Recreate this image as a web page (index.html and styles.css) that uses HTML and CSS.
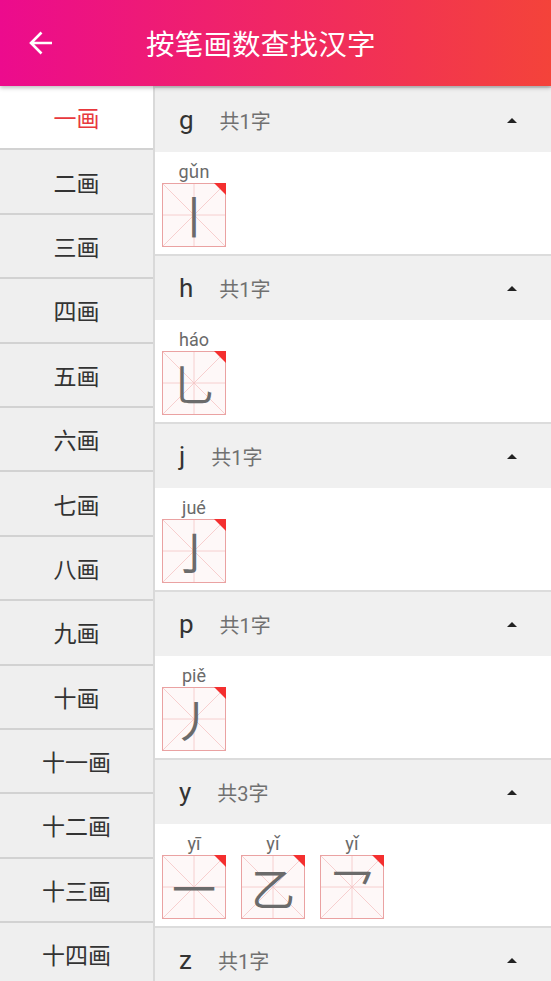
FILE: index.html
```html
<!DOCTYPE html>
<html lang="zh-CN">
<head>
  <meta charset="UTF-8">
  <meta name="viewport" content="width=device-width, initial-scale=1.0">
  <title>按笔画数查找汉字</title>
  <link rel="stylesheet" href="styles.css">
</head>
<body>
  <header class="topbar">
    <span class="back">
      <svg width="24" height="24" viewBox="0 0 24 24"><path d="M23 12H2 M12.5 1.5 L2 12 L12.5 22.5" fill="none" stroke="#fff" stroke-width="2.6"/></svg>
    </span>
    <h1 class="title">按笔画数查找汉字</h1>
  </header>

  <div class="main">
    <ul class="sidebar">
      <li class="active">一画</li>
      <li>二画</li>
      <li>三画</li>
      <li>四画</li>
      <li>五画</li>
      <li>六画</li>
      <li>七画</li>
      <li>八画</li>
      <li>九画</li>
      <li>十画</li>
      <li>十一画</li>
      <li>十二画</li>
      <li>十三画</li>
      <li>十四画</li>
    </ul>

    <div class="list">
      <section class="group">
        <div class="group-head"><span class="letter">g</span><span class="count">共1字</span><span class="caret"></span></div>
        <div class="chars">
          <div class="char"><span class="py">gǔn</span><div class="cell"><svg class="grid" viewBox="0 0 64 64"><use href="#grid"/></svg><span class="hz">丨</span></div></div>
        </div>
      </section>
      <section class="group">
        <div class="group-head"><span class="letter">h</span><span class="count">共1字</span><span class="caret"></span></div>
        <div class="chars">
          <div class="char"><span class="py">háo</span><div class="cell"><svg class="grid" viewBox="0 0 64 64"><use href="#grid"/></svg><span class="hz">乚</span></div></div>
        </div>
      </section>
      <section class="group">
        <div class="group-head"><span class="letter">j</span><span class="count">共1字</span><span class="caret"></span></div>
        <div class="chars">
          <div class="char"><span class="py">jué</span><div class="cell"><svg class="grid" viewBox="0 0 64 64"><use href="#grid"/></svg><span class="hz">亅</span></div></div>
        </div>
      </section>
      <section class="group">
        <div class="group-head"><span class="letter">p</span><span class="count">共1字</span><span class="caret"></span></div>
        <div class="chars">
          <div class="char"><span class="py">piě</span><div class="cell"><svg class="grid" viewBox="0 0 64 64"><use href="#grid"/></svg><span class="hz">丿</span></div></div>
        </div>
      </section>
      <section class="group">
        <div class="group-head"><span class="letter">y</span><span class="count">共3字</span><span class="caret"></span></div>
        <div class="chars">
          <div class="char"><span class="py">yī</span><div class="cell"><svg class="grid" viewBox="0 0 64 64"><use href="#grid"/></svg><span class="hz">一</span></div></div>
          <div class="char"><span class="py">yǐ</span><div class="cell"><svg class="grid" viewBox="0 0 64 64"><use href="#grid"/></svg><span class="hz">乙</span></div></div>
          <div class="char"><span class="py">yǐ</span><div class="cell"><svg class="grid" viewBox="0 0 64 64"><use href="#grid"/></svg><span class="hz">乛</span></div></div>
        </div>
      </section>
      <section class="group">
        <div class="group-head"><span class="letter">z</span><span class="count">共1字</span><span class="caret"></span></div>
      </section>
    </div>
  </div>

  <!-- shared 米字格 grid -->
  <svg width="0" height="0" class="defs">
    <defs>
      <g id="grid">
        <rect x="0" y="0" width="64" height="64" fill="#fef8f8"/>
        <path d="M0 0L64 64 M64 0L0 64 M32 0V64 M0 32H64" stroke="#f5c4c4" stroke-width="0.8"/>
        <rect x="0.5" y="0.5" width="63" height="63" fill="none" stroke="#eaa2a2" stroke-width="1"/>
        <path d="M52 0H64V12Z" fill="#f42f2f"/>
      </g>
    </defs>
  </svg>
</body>
</html>
```

FILE: styles.css
```css
body {
  margin: 0;
  font-family: Roboto, "Noto Sans CJK SC", sans-serif;
  background: #fff;
  overflow: hidden;
}

.topbar {
  position: relative;
  z-index: 2;
  height: 86px;
  display: flex;
  align-items: center;
  padding-left: 29px;
  background: linear-gradient(to right, #ec0b8d, #f4433a);
  box-shadow: 0 2px 4px rgba(0, 0, 0, 0.25);
}

.back {
  display: flex;
  width: 24px;
  height: 24px;
}

.title {
  margin: 0 0 2px 93px;
  font-size: 28.5px;
  font-weight: normal;
  color: #fff;
  letter-spacing: 0.2px;
}

.main {
  display: flex;
  height: calc(100vh - 86px);
}

.sidebar {
  list-style: none;
  margin: 0;
  padding: 0;
  width: 153px;
  flex: none;
  background: #efefef;
  border-right: 2px solid #d9d9d9;
}

.sidebar li {
  height: 62.4px;
  display: flex;
  align-items: center;
  justify-content: center;
  border-bottom: 2px solid #d2d2d2;
  font-size: 23px;
  color: #333;
}

.sidebar li.active {
  background: #fff;
  color: #e8383d;
}

.list {
  flex: 1;
}

.group {
  border-top: 2px solid #dcdcdc;
}

.group-head {
  height: 64px;
  display: flex;
  align-items: center;
  padding: 0 34px 0 24px;
  background: #f0f0f0;
}

.letter {
  font-size: 26px;
  color: #333;
  margin-right: 26px;
}

.count {
  font-size: 20px;
  color: #707070;
}

.caret {
  margin-left: auto;
  width: 0;
  height: 0;
  border-left: 5px solid transparent;
  border-right: 5px solid transparent;
  border-bottom: 5px solid #222;
}

.chars {
  height: 102px;
  box-sizing: border-box;
  padding: 10px 0 0 7px;
  display: flex;
  gap: 15px;
  background: #fff;
}

.char {
  display: flex;
  flex-direction: column;
  align-items: center;
  width: 64px;
}

.py {
  height: 20px;
  line-height: 20px;
  margin-bottom: 1px;
  font-size: 18px;
  color: #6a6a6a;
}

.cell {
  position: relative;
  width: 64px;
  height: 64px;
  display: flex;
  align-items: center;
  justify-content: center;
}

.grid {
  position: absolute;
  left: 0;
  top: 0;
  width: 64px;
  height: 64px;
}

.hz {
  position: relative;
  font-family: "Noto Sans CJK SC", sans-serif;
  font-size: 44px;
  line-height: 64px;
  color: #6b6b6b;
}

.defs {
  position: absolute;
}
```
